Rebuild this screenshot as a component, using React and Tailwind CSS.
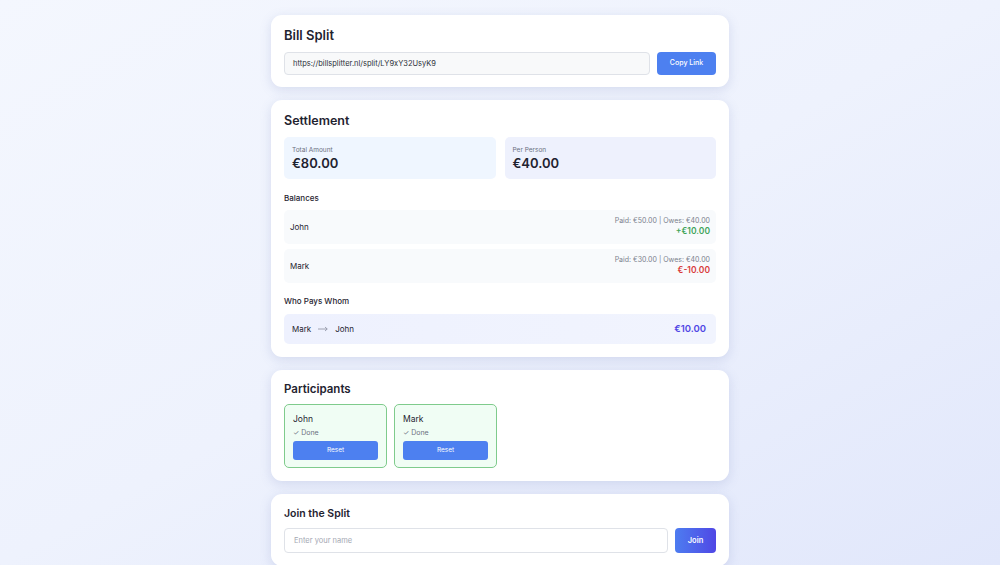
import React from 'react';

const balances = [
  { name: 'John', paid: '€50.00', owes: '€40.00', net: '+€10.00', positive: true },
  { name: 'Mark', paid: '€30.00', owes: '€40.00', net: '€-10.00', positive: false },
];

const participants = ['John', 'Mark'];

const Card = ({ children, className = '' }) => (
  <div className={`bg-white rounded-[11px] shadow-[0_3px_12px_rgba(90,105,170,0.18)] px-[13px] ${className}`}>
    {children}
  </div>
);

const App = () => {
  return (
    <div
      className="min-h-screen h-[565px] overflow-hidden bg-gradient-to-br from-[#f4f7fe] via-[#eef2fd] to-[#e1e7fb] text-[#1f2330]"
      style={{ fontFamily: 'Inter, "Noto Sans", sans-serif' }}
    >
      <div className="w-[458px] mx-auto pt-[15px] flex flex-col gap-[13px]">
        {/* Link */}
        <Card className="pt-[12px] pb-[12px]">
          <h1 className="text-[13px] leading-[16px] font-semibold">Bill Split</h1>
          <div className="flex gap-[7px] mt-[9px]">
            <div className="flex-1 h-[23px] rounded-[4px] border border-[#dfe2e8] bg-[#f8f9fa] px-[8px] flex items-center text-[7.5px] text-[#2b2f38]">
              https://billsplitter.nl/split/LY9xY32UsyK9
            </div>
            <button className="w-[59px] h-[23px] rounded-[4px] bg-[#4d80f0] text-white text-[7px] font-medium">
              Copy Link
            </button>
          </div>
        </Card>

        {/* Settlement */}
        <Card className="pt-[13px] pb-[13px]">
          <h2 className="text-[12.5px] leading-[16px] font-semibold">Settlement</h2>
          <div className="grid grid-cols-2 gap-[9px] mt-[8px]">
            <div className="h-[42px] rounded-[5px] bg-[#eff6ff] px-[8px] pt-[9px]">
              <p className="text-[6.5px] leading-[8px] text-[#6b7080]">Total Amount</p>
              <p className="text-[13px] leading-[16px] font-semibold mt-[1px]">€80.00</p>
            </div>
            <div className="h-[42px] rounded-[5px] bg-[#eef1fd] px-[8px] pt-[9px]">
              <p className="text-[6.5px] leading-[8px] text-[#6b7080]">Per Person</p>
              <p className="text-[13px] leading-[16px] font-semibold mt-[1px]">€40.00</p>
            </div>
          </div>

          <p className="text-[8px] leading-[10px] font-medium mt-[14px]">Balances</p>
          <div className="flex flex-col gap-[5px] mt-[7px]">
            {balances.map((b) => (
              <div key={b.name} className="h-[34px] rounded-[5px] bg-[#f8fafc] pl-[6px] pr-[6px] flex items-center justify-between">
                <span className="text-[8px]">{b.name}</span>
                <div className="text-right">
                  <p className="text-[7px] leading-[9px] text-[#7a7f8c]">
                    Paid: {b.paid} | Owes: {b.owes}
                  </p>
                  <p className={`text-[8.5px] leading-[13px] font-semibold ${b.positive ? 'text-[#3fa45a]' : 'text-[#d93a3a]'}`}>
                    {b.net}
                  </p>
                </div>
              </div>
            ))}
          </div>

          <p className="text-[8px] leading-[10px] font-medium mt-[13px]">Who Pays Whom</p>
          <div className="h-[30px] mt-[8px] rounded-[5px] bg-gradient-to-r from-[#eef1fe] to-[#f1f4fe] px-[8px] flex items-center justify-between">
            <div className="flex items-center gap-[7px] text-[8px]">
              <span>Mark</span>
              <svg width="10" height="6" viewBox="0 0 10 6" fill="none" stroke="#8a8fa0" strokeWidth="0.8">
                <path d="M0 3h9.2M7 1l2.2 2L7 5" />
              </svg>
              <span>John</span>
            </div>
            <span className="text-[9.5px] font-semibold text-[#4f46e5] pr-[2px]">€10.00</span>
          </div>
        </Card>

        {/* Participants */}
        <Card className="pt-[12px] pb-[13px]">
          <h2 className="text-[11.5px] leading-[14px] font-semibold">Participants</h2>
          <div className="flex gap-[7px] mt-[8px]">
            {participants.map((p) => (
              <div key={p} className="w-[103px] h-[64px] rounded-[5px] border border-[#7fcb8c] bg-[#f0fdf4] px-[8px] pt-[9px]">
                <p className="text-[8.5px] leading-[11px]">{p}</p>
                <p className="text-[7px] leading-[9px] text-[#6b7080] mt-[3px]">✓ Done</p>
                <button className="block w-full h-[19px] mt-[4px] rounded-[3px] bg-[#4d80f0] text-white text-[6.5px]">
                  Reset
                </button>
              </div>
            ))}
          </div>
        </Card>

        {/* Join */}
        <Card className="pt-[13px] pb-[13px]">
          <h2 className="text-[10.5px] leading-[13px] font-semibold">Join the Split</h2>
          <div className="flex gap-[7px] mt-[8px]">
            <div className="flex-1 h-[25px] rounded-[4px] border border-[#dfe2e8] bg-white px-[9px] flex items-center text-[7.5px] text-[#a4a8b3]">
              Enter your name
            </div>
            <button className="w-[41px] h-[25px] rounded-[4px] bg-gradient-to-r from-[#4d7cf0] to-[#4f46e5] text-white text-[7.5px] font-semibold">
              Join
            </button>
          </div>
        </Card>
      </div>
    </div>
  );
};

export default App;
